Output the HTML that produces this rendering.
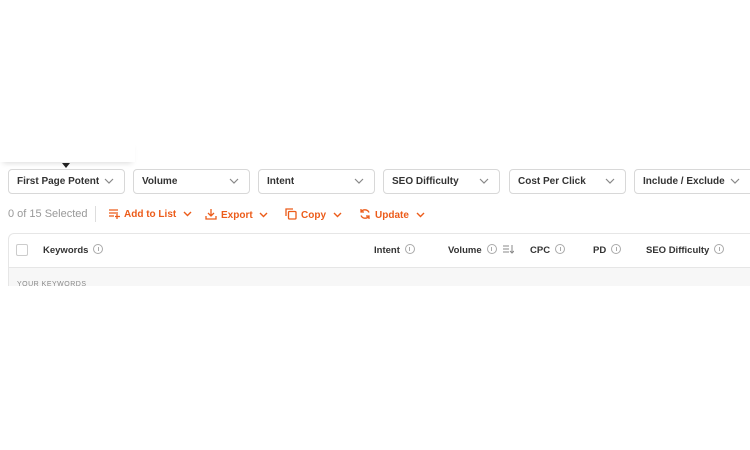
<!DOCTYPE html>
<html><head><style>
body{margin:0;width:750px;height:450px;background:#fff;font-family:"Liberation Sans",Arial,sans-serif;position:relative;overflow:hidden;color:#222}
.sh{position:absolute;left:0;top:140px;width:135px;height:22px;background:#fff;box-shadow:0 4px 6px -3px rgba(0,0,0,.15)}
.caret{position:absolute;left:62px;top:163px;width:0;height:0;border-left:4px solid transparent;border-right:4px solid transparent;border-top:5px solid #222}
.dd{position:absolute;top:169px;border:1px solid #d8d8d8;border-radius:4px;font-size:10px;font-weight:bold;line-height:23px;padding-left:8px;box-sizing:border-box;width:117px;height:25px;color:#333}
.dd span{display:inline-block;max-width:85px;overflow:hidden;white-space:nowrap;vertical-align:top}
.dd svg{position:absolute;right:10px;top:8px}
.tb{position:absolute;top:208px;font-size:10px;font-weight:bold;color:#ec5c1a;line-height:12px}
.card{position:absolute;left:8px;top:233px;width:760px;height:80px;border:1px solid #e6e6e6;border-radius:6px;box-sizing:border-box;overflow:hidden}
.gray{position:absolute;left:0;top:33px;right:0;height:60px;background:#f7f7f7;border-top:1px solid #e6e6e6}
.h{position:absolute;top:244px;font-size:9.5px;font-weight:bold;color:#333}
.i{display:inline-block;width:8px;height:8px;border:1px solid #aaa;border-radius:50%;margin-left:5px;vertical-align:-1px;position:relative}
.i:after{content:"";position:absolute;left:3.5px;top:2px;width:1px;height:4px;background:#aaa}
</style></head><body>
<div class="sh"></div><div class="caret"></div>
<div class="dd" style="left:8px"><span style="max-width:82px">First Page Potential.</span><svg width="10" height="7"><path d="M1 1l4 4 4-4" fill="none" stroke="#888" stroke-width="1.2"/></svg></div>
<div class="dd" style="left:133px"><span>Volume</span><svg width="10" height="7"><path d="M1 1l4 4 4-4" fill="none" stroke="#888" stroke-width="1.2"/></svg></div>
<div class="dd" style="left:258px"><span>Intent</span><svg width="10" height="7"><path d="M1 1l4 4 4-4" fill="none" stroke="#888" stroke-width="1.2"/></svg></div>
<div class="dd" style="left:383px"><span>SEO Difficulty</span><svg width="10" height="7"><path d="M1 1l4 4 4-4" fill="none" stroke="#888" stroke-width="1.2"/></svg></div>
<div class="dd" style="left:509px"><span>Cost Per Click</span><svg width="10" height="7"><path d="M1 1l4 4 4-4" fill="none" stroke="#888" stroke-width="1.2"/></svg></div>
<div class="dd" style="left:634px;width:130px"><span>Include / Exclude</span><svg width="10" height="7" style="right:23px"><path d="M1 1l4 4 4-4" fill="none" stroke="#888" stroke-width="1.2"/></svg></div>
<div class="tb" style="left:8px;color:#999;font-weight:normal;font-size:11px">0 of 15 Selected</div>
<div style="position:absolute;left:95px;top:206px;width:1px;height:16px;background:#ddd"></div>
<div class="tb" style="left:108px"><svg width="12" height="11" style="vertical-align:-2px;margin-right:4px"><path d="M1 2h9M1 5h9M1 8h5M9 6v5M7 8.5h5" stroke="#ec5c1a" stroke-width="1.3" fill="none"/></svg>Add to List <svg width="9" height="6" style="margin-left:4px"><path d="M1 1l3.5 3.5L8 1" fill="none" stroke="#ec5c1a" stroke-width="1.4"/></svg></div>
<div class="tb" style="left:205px"><svg width="12" height="12" style="vertical-align:-2px;margin-right:4px"><path d="M6 1v7M3 5l3 3 3-3M1 8v3h10V8" stroke="#ec5c1a" stroke-width="1.3" fill="none"/></svg>Export <svg width="9" height="6" style="margin-left:4px"><path d="M1 1l3.5 3.5L8 1" fill="none" stroke="#ec5c1a" stroke-width="1.4"/></svg></div>
<div class="tb" style="left:285px"><svg width="12" height="12" style="vertical-align:-2px;margin-right:4px"><rect x="3.5" y="3.5" width="7.5" height="7.5" rx="1" stroke="#ec5c1a" stroke-width="1.3" fill="none"/><path d="M1 8V1h7" stroke="#ec5c1a" stroke-width="1.3" fill="none"/></svg>Copy <svg width="9" height="6" style="margin-left:4px"><path d="M1 1l3.5 3.5L8 1" fill="none" stroke="#ec5c1a" stroke-width="1.4"/></svg></div>
<div class="tb" style="left:359px"><svg width="12" height="12" style="vertical-align:-2px;margin-right:4px"><path d="M10 4.5A4.5 4.5 0 0 0 2 4M2 7.5A4.5 4.5 0 0 0 10 8M2 1v3h3M10 11V8H7" stroke="#ec5c1a" stroke-width="1.3" fill="none"/></svg>Update <svg width="9" height="6" style="margin-left:4px"><path d="M1 1l3.5 3.5L8 1" fill="none" stroke="#ec5c1a" stroke-width="1.4"/></svg></div>
<div class="card"><div class="gray"><div style="position:absolute;left:8px;top:13px;font-size:7px;color:#888;letter-spacing:.5px">YOUR KEYWORDS</div></div></div>
<div style="position:absolute;left:16px;top:244px;width:10px;height:10px;border:1px solid #ccc;border-radius:2px"></div>
<div class="h" style="left:43px">Keywords<span class="i"></span></div>
<div class="h" style="left:374px">Intent<span class="i"></span></div>
<div class="h" style="left:448px">Volume<span class="i"></span><svg width="12" height="10" style="margin-left:5px;vertical-align:-1px"><path d="M1 2h6M1 5h6M1 8h6M10 1v8M8 7l2 2 2-2" stroke="#888" fill="none"/></svg></div>
<div class="h" style="left:530px">CPC<span class="i"></span></div>
<div class="h" style="left:593px">PD<span class="i"></span></div>
<div class="h" style="left:646px">SEO Difficulty<span class="i"></span></div>
<div style="position:absolute;left:0;top:286px;width:750px;height:164px;background:#fff"></div>
</body></html>
